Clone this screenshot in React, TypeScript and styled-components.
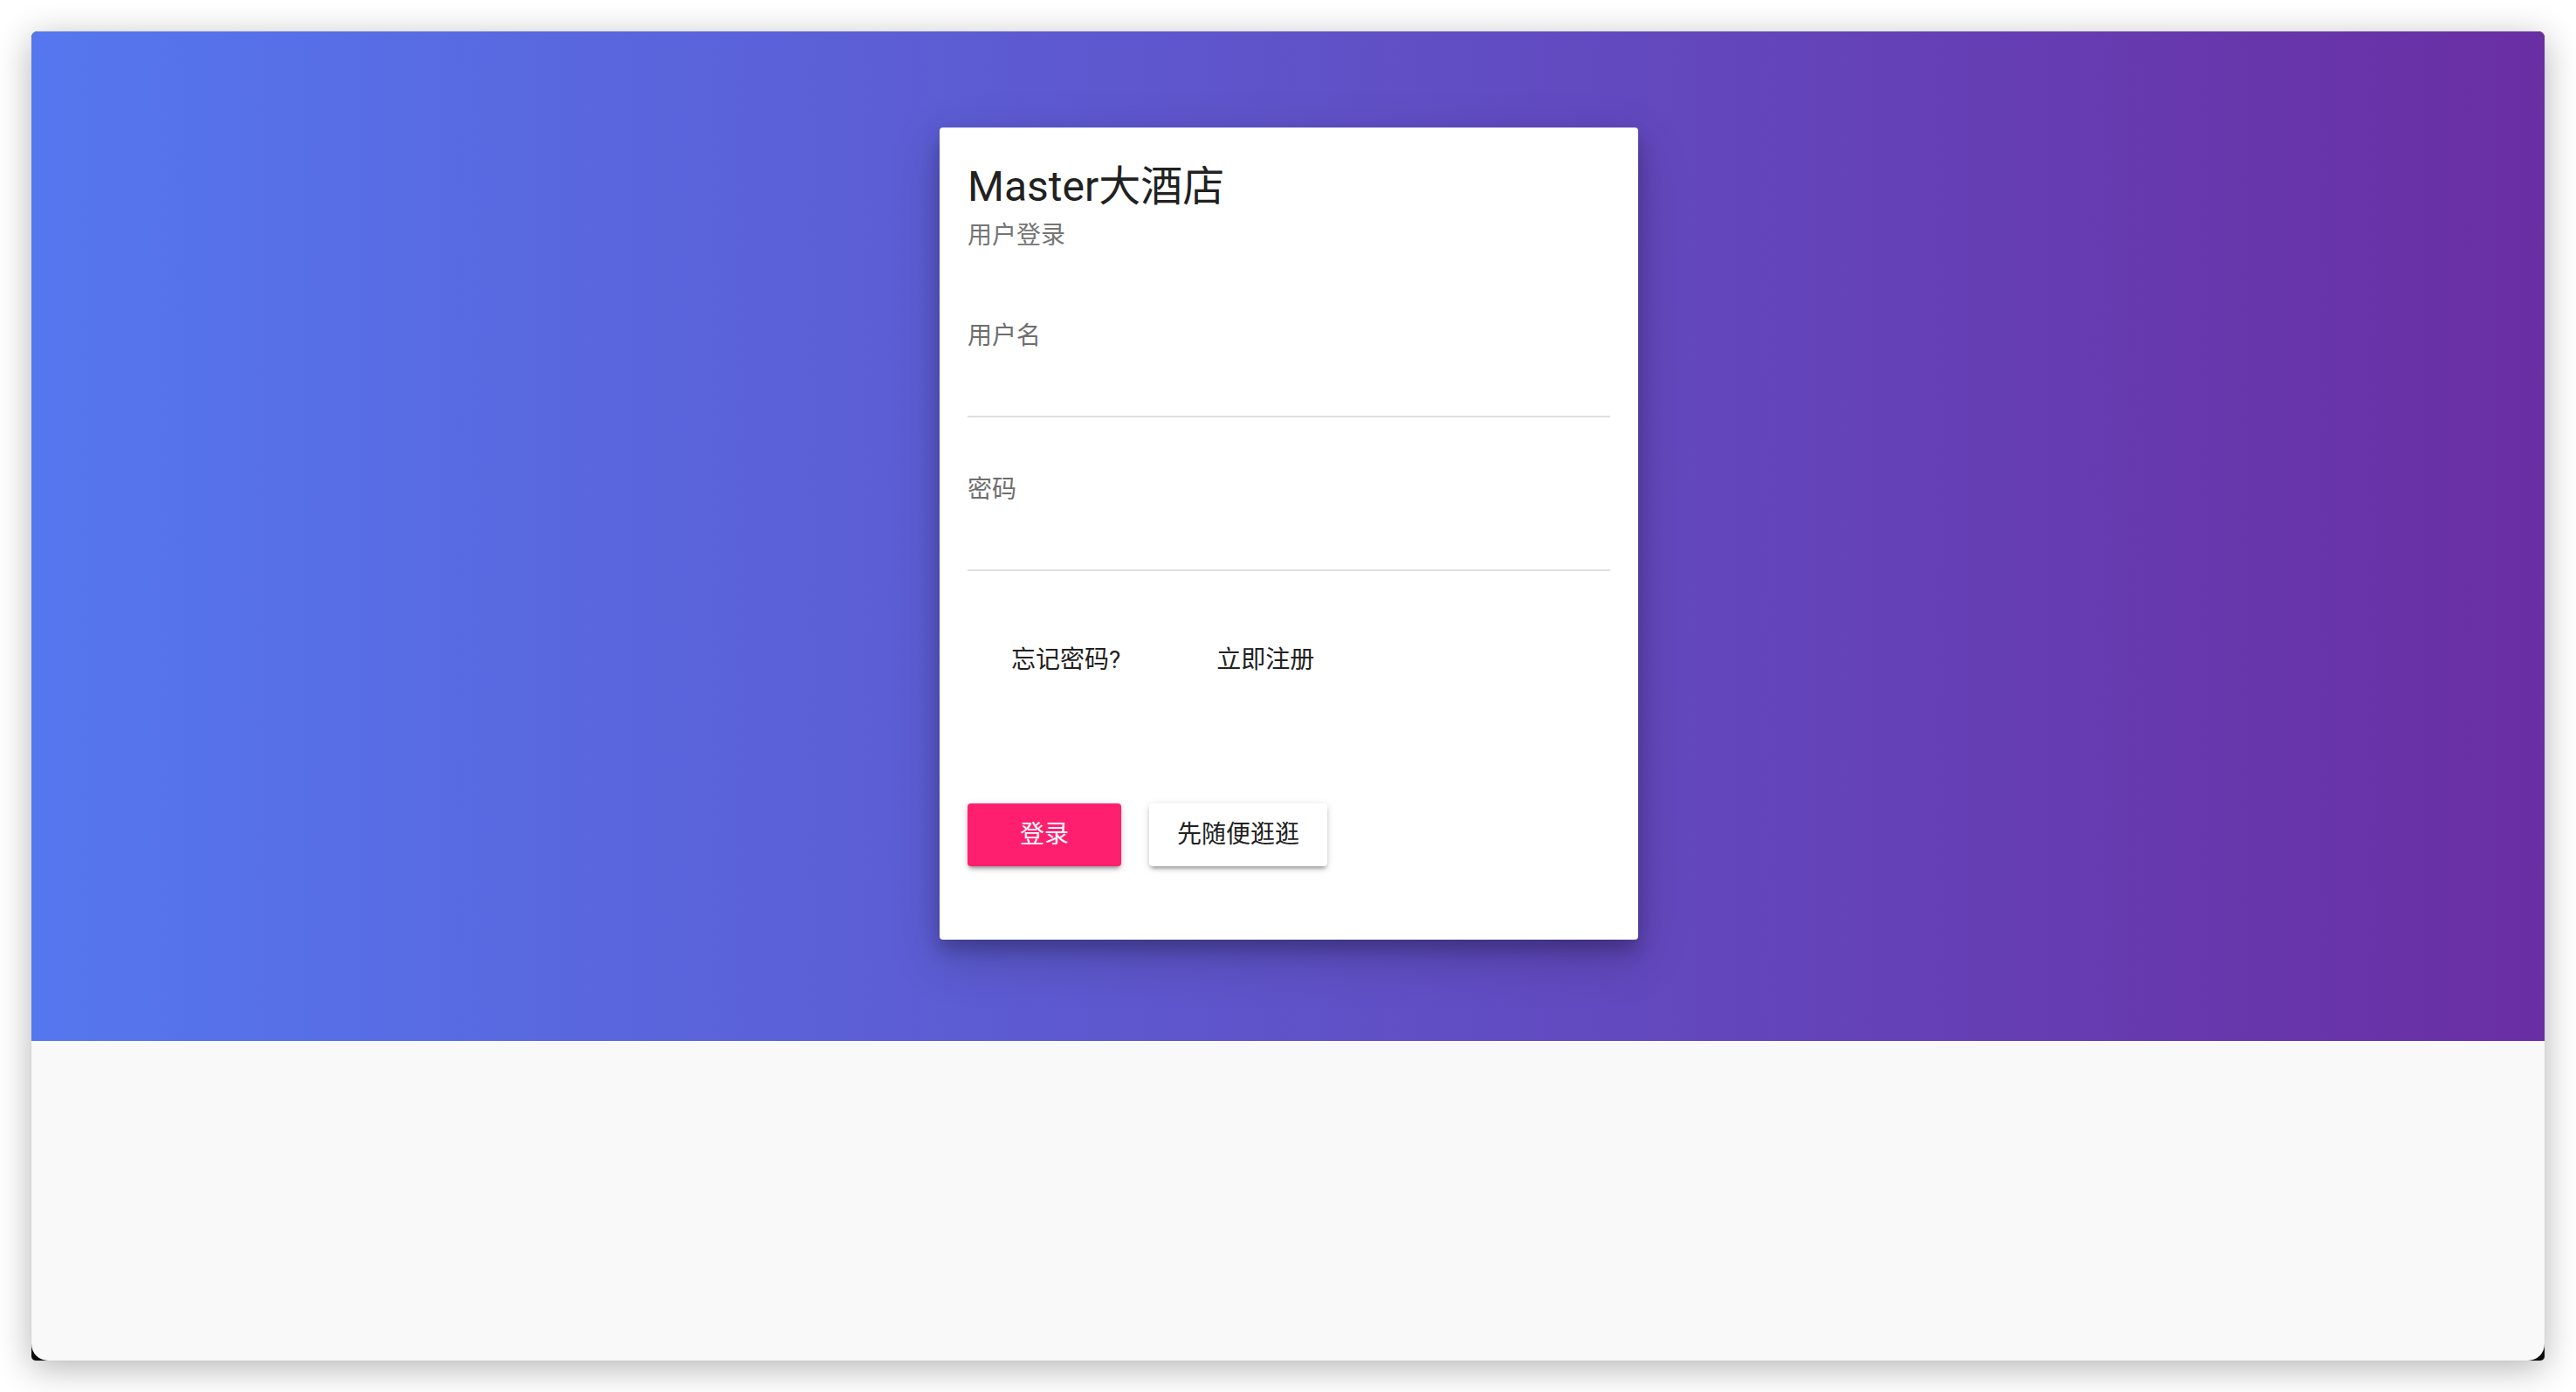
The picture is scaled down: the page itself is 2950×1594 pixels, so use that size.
import React from "react";
import styled, { createGlobalStyle } from "styled-components";

const GlobalStyle = createGlobalStyle`
  html, body {
    margin: 0;
    padding: 0;
    background: #ffffff;
  }
  body {
    font-family: Roboto, "Noto Sans CJK SC", sans-serif;
  }
  *, *::before, *::after {
    box-sizing: border-box;
  }
`;

const Desktop = styled.div`
  height: 1594px;
  padding: 36px;
  background: #ffffff;
`;

const Window = styled.div`
  height: 100%;
  display: flex;
  flex-direction: column;
  background: #0b0b0b;
  border-radius: 7px 7px 5px 5px;
  overflow: hidden;
  box-shadow: 0 8px 40px rgba(0, 0, 0, 0.3), 0 0 1px rgba(0, 0, 0, 0.25);
`;

const Hero = styled.section`
  flex: none;
  height: 1156px;
  display: flex;
  justify-content: center;
  align-items: flex-start;
  padding: 110px 0 0 2px;
  background: linear-gradient(90deg, #5577ef 0%, #6a2ea3 100%);
`;

const Footer = styled.div`
  flex: 1;
  background: #f9f9f9;
  border-radius: 0 0 19px 19px;
`;

const Card = styled.form`
  width: 800px;
  height: 930px;
  display: flex;
  flex-direction: column;
  padding: 40px 32px 0;
  background: #ffffff;
  border-radius: 4px;
  box-shadow: 0 12px 20px rgba(0, 0, 0, 0.23), 0 20px 60px rgba(0, 0, 0, 0.19);
`;

const Title = styled.h1`
  margin: 0;
  font-size: 48px;
  line-height: 56px;
  font-weight: 400;
  color: #212121;
`;

const Subtitle = styled.div`
  margin-top: 12px;
  font-size: 28px;
  line-height: 32px;
  color: #757575;
`;

const Fields = styled.div`
  margin-top: 16px;
  display: flex;
  flex-direction: column;
`;

const Field = styled.label`
  height: 176px;
  display: flex;
  flex-direction: column;
  padding-top: 67px;
`;

const FieldLabel = styled.span`
  font-size: 28px;
  line-height: 32px;
  color: #6e6e6e;
`;

const Input = styled.input`
  width: 100%;
  height: 77px;
  border: none;
  outline: none;
  background: transparent;
  font: inherit;
  font-size: 32px;
  color: #212121;
  padding: 0;
  border-bottom: 2px solid #e0e0e0;
`;

const LinksRow = styled.div`
  margin-top: 66px;
  height: 72px;
  display: flex;
  gap: 46px;
  padding-left: 18px;
`;

const LinkButton = styled.button`
  height: 72px;
  padding: 0 32px;
  border: none;
  background: transparent;
  font-family: inherit;
  font-size: 28px;
  line-height: 72px;
  color: #212121;
  border-radius: 4px;
  cursor: pointer;
`;

const ButtonRow = styled.div`
  margin-top: 128px;
  display: flex;
  gap: 32px;
`;

const RaisedButton = styled.button<{ $primary?: boolean }>`
  height: 72px;
  min-width: 176px;
  padding: 0 32px;
  border: none;
  border-radius: 4px;
  font-family: inherit;
  font-size: 28px;
  line-height: 72px;
  cursor: pointer;
  background: ${(p) => (p.$primary ? "#ff1f6e" : "#ffffff")};
  color: ${(p) => (p.$primary ? "#ffffff" : "#212121")};
  box-shadow: 0 2px 10px rgba(0, 0, 0, 0.14), 0 4px 5px -2px rgba(0, 0, 0, 0.38);
`;

export default function App() {
  return (
    <>
      <GlobalStyle />
      <Desktop>
        <Window>
          <Hero>
            <Card onSubmit={(e) => e.preventDefault()}>
              <Title>Master大酒店</Title>
              <Subtitle>用户登录</Subtitle>
              <Fields>
                <Field>
                  <FieldLabel>用户名</FieldLabel>
                  <Input type="text" />
                </Field>
                <Field>
                  <FieldLabel>密码</FieldLabel>
                  <Input type="password" />
                </Field>
              </Fields>
              <LinksRow>
                <LinkButton type="button">忘记密码?</LinkButton>
                <LinkButton type="button">立即注册</LinkButton>
              </LinksRow>
              <ButtonRow>
                <RaisedButton type="submit" $primary>
                  登录
                </RaisedButton>
                <RaisedButton type="button">先随便逛逛</RaisedButton>
              </ButtonRow>
            </Card>
          </Hero>
          <Footer />
        </Window>
      </Desktop>
    </>
  );
}
